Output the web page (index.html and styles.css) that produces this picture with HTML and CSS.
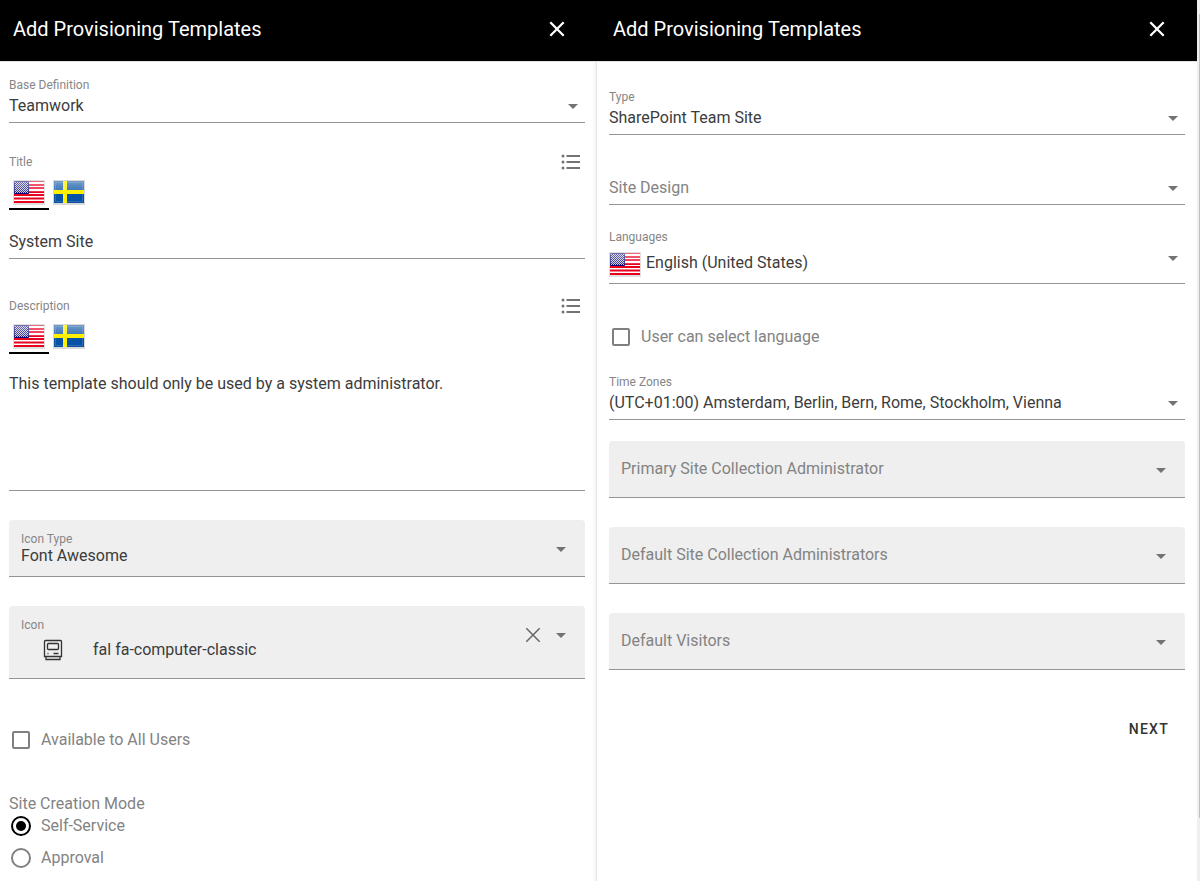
FILE: index.html
```html
<!DOCTYPE html>
<html lang="en">
<head>
<meta charset="utf-8">
<title>Add Provisioning Templates</title>
<link rel="stylesheet" href="styles.css">
</head>
<body>
<svg class="defs" aria-hidden="true">
  <defs>
    <linearGradient id="gloss" x1="0" y1="0" x2="0" y2="1">
      <stop offset="0" stop-color="#fff" stop-opacity=".42"/>
      <stop offset=".48" stop-color="#fff" stop-opacity=".2"/>
      <stop offset=".5" stop-color="#fff" stop-opacity="0"/>
    </linearGradient>
    <pattern id="stars" width="2" height="2" patternUnits="userSpaceOnUse">
      <path fill="#0c0c78" d="M0 0h2v2H0z"/><path fill="#c9c9e6" d="M0 0h1v1H0zM1 1h1v1H1z"/>
    </pattern>
    <symbol id="us" viewBox="0 0 32 25">
      <path fill="#000" opacity=".12" d="M0 0h32v25H0z"/>
      <path fill="#fff" d="M1 1h30v22H1z"/>
      <path fill="#e8001f" d="M1 1h30v1H1zM1 4h30v2H1zM1 7h30v2H1zM1 11h30v2H1zM1 14h30v2H1zM1 17.500h30v2H1zM1 21h30v2H1z"/>
      <path fill="url(#stars)" d="M1 1h15v13H1z"/>
      <path fill="none" stroke="#0c0c78" d="M1.500 1.500h14v12h-14z"/>
      <path fill="url(#gloss)" d="M1 1h30v22H1z"/>
    </symbol>
    <symbol id="se" viewBox="0 0 32 25">
      <path fill="#000" opacity=".15" d="M0 0h32v25H0z"/>
      <path fill="#0852a5" d="M1 1h30v22H1z"/>
      <path fill="url(#gloss)" d="M1 1h30v22H1z"/>
      <path fill="none" stroke="#fff" stroke-opacity=".15" d="M2.500 2.500h27v19h-27z"/>
      <path fill="#fff000" d="M10 1h4v22h-4zM1 10h30v4H1z"/>
      <path fill="#fff" opacity=".25" d="M10 1h4v9h-4z"/>
    </symbol>
    <symbol id="caret" viewBox="0 0 10 5"><path fill="#737373" d="M0 0h10L5 5z"/></symbol>
    <symbol id="list" viewBox="0 0 20 16">
      <path stroke="#737373" stroke-width="2" d="M5.500 2h13.500M5.500 8h13.500M5.500 14h13.500"/>
      <g fill="#737373"><circle cx="2" cy="2" r="1.500"/><circle cx="2" cy="8" r="1.500"/><circle cx="2" cy="14" r="1.500"/></g>
    </symbol>
    <symbol id="close" viewBox="0 0 16 16"><path fill="none" stroke="currentColor" d="M1.300 1.300l13.400 13.400M14.700 1.300L1.300 14.700"/></symbol>
  </defs>
</svg>
<main class="app">
  <section class="panel left">
    <header class="bar"><h1>Add Provisioning Templates</h1><svg class="close"><use href="#close"/></svg></header>
    <div class="body">
      <div class="field base">
        <div class="label">Base Definition</div>
        <div class="value">Teamwork<svg class="caret"><use href="#caret"/></svg></div>
      </div>
      <div class="field title">
        <div class="label">Title<svg class="list"><use href="#list"/></svg></div>
        <div class="tabs"><span class="tab active"><svg class="flag"><use href="#us"/></svg></span><span class="tab"><svg class="flag"><use href="#se"/></svg></span></div>
        <div class="value">System Site</div>
      </div>
      <div class="field description">
        <div class="label">Description<svg class="list"><use href="#list"/></svg></div>
        <div class="tabs"><span class="tab active"><svg class="flag"><use href="#us"/></svg></span><span class="tab"><svg class="flag"><use href="#se"/></svg></span></div>
        <div class="value">This template should only be used by a system administrator.</div>
      </div>
      <div class="box icon-type">
        <div><div class="label">Icon Type</div><div class="value">Font Awesome</div></div>
        <svg class="caret"><use href="#caret"/></svg>
      </div>
      <div class="box icon">
        <div>
          <div class="label">Icon</div>
          <div class="value">
            <svg class="computer" viewBox="0 0 20 22" fill="none" stroke="#333" stroke-width="1.300"><path d="M2.500 1.500h15q1 0 1 1v15h-17v-15q0-1 1-1zM3 17.500v3h14v-3"/><rect x="4.500" y="4.500" width="11" height="6" rx="1"/><path d="M4.500 14.500h1M10.500 14.500h5"/></svg>
            fal fa-computer-classic
          </div>
        </div>
        <div class="actions"><svg class="clear"><use href="#close"/></svg><svg class="caret"><use href="#caret"/></svg></div>
      </div>
      <div class="option available"><span class="check"></span>Available to All Users</div>
      <div class="mode">Site Creation Mode</div>
      <div class="option"><span class="radio on"></span>Self-Service</div>
      <div class="option approval"><span class="radio"></span>Approval</div>
    </div>
  </section>
  <section class="panel right">
    <header class="bar"><h1>Add Provisioning Templates</h1><svg class="close"><use href="#close"/></svg></header>
    <div class="body">
      <div class="field type">
        <div class="label">Type</div>
        <div class="value">SharePoint Team Site<svg class="caret"><use href="#caret"/></svg></div>
      </div>
      <div class="field design"><div class="value muted">Site Design<svg class="caret"><use href="#caret"/></svg></div></div>
      <div class="field languages">
        <div class="label">Languages</div>
        <div class="value"><svg class="flag"><use href="#us"/></svg>English (United States)<svg class="caret"><use href="#caret"/></svg></div>
      </div>
      <div class="option select-language"><span class="check"></span>User can select language</div>
      <div class="field zones">
        <div class="label">Time Zones</div>
        <div class="value">(UTC+01:00) Amsterdam, Berlin, Bern, Rome, Stockholm, Vienna<svg class="caret"><use href="#caret"/></svg></div>
      </div>
      <div class="box people primary">Primary Site Collection Administrator<svg class="caret"><use href="#caret"/></svg></div>
      <div class="box people">Default Site Collection Administrators<svg class="caret"><use href="#caret"/></svg></div>
      <div class="box people">Default Visitors<svg class="caret"><use href="#caret"/></svg></div>
      <div class="next">NEXT</div>
    </div>
  </section>
  <div class="scroll"><div class="thumb"></div></div>
</main>
</body>
</html>
```
FILE: styles.css
```css
* { box-sizing: border-box; }
body { margin: 0; background: #fff; font: 16px/20px Roboto, sans-serif; color: #3c3c3c; overflow: hidden; }
svg { display: block; flex: none; }
.defs { position: absolute; width: 0; height: 0; }
.app { display: flex; height: 881px; }
.panel { height: 881px; overflow: hidden; }
.left { width: 597px; }
.right { width: 600px; }
.bar { display: flex; align-items: center; justify-content: space-between; height: 61px; padding: 0 32px 4px 13px; background: #000; color: #fff; }
.right .bar { padding-left: 16px; }
h1 { margin: 0; font-size: 20px; line-height: 28px; font-weight: 400; }
.close { width: 16px; height: 16px; stroke-width: 2.300; }
.body { height: 820px; padding: 13px 12px 0; border-top: 1px solid #e4e4e4; }
.left .body { padding: 13px 11px 0 9px; border-right: 1px solid #e4e4e4; background: linear-gradient(to left, #f6f6f6, #fff 4px); }
.right .body { padding-top: 25px; }
.field { border-bottom: 1px solid #949494; }
.label { display: flex; align-items: center; height: 20px; font-size: 12px; color: #868686; }
.value { display: flex; align-items: center; height: 20px; white-space: nowrap; }
.muted { color: #838383; }
.caret { width: 10px; height: 5px; }
.field .caret { margin: 0 7px 0 auto; }
.list { width: 20px; height: 16px; margin-left: auto; margin-right: 4px; }
.flag { width: 32px; height: 25px; }
.base, .type { height: 48px; }
.base .value, .type .value, .zones .value { margin-top: 1px; }
.title { height: 107px; margin-top: 29px; }
.description { height: 195px; margin-top: 37px; }
.tabs { display: flex; height: 34px; margin-top: 4px; }
.tab { width: 40px; padding: 4px 4px 0; }
.active { border-bottom: 2px solid #000; }
.title .value { margin-top: 22px; }
.description .value { margin-top: 20px; }
.box { display: flex; align-items: center; justify-content: space-between; padding: 0 19px 0 12px; background: #efefef; border-bottom: 1px solid #949494; border-radius: 4px 4px 0 0; }
.icon-type { height: 57px; margin-top: 29px; align-items: flex-start; padding-top: 9px; }
.icon-type .value { margin-top: -3px; }
.icon-type > .caret { margin-top: 18px; }
.icon { height: 73px; margin-top: 29px; align-items: flex-start; padding-top: 9px; }
.icon .value { margin-top: 5px; }
.computer { width: 20px; height: 22px; margin: 0 30px 0 22px; }
.actions { display: flex; align-items: center; gap: 15px; margin-top: 12px; }
.clear { width: 16px; height: 16px; color: #666; stroke-width: 1.500; }
.option { display: flex; align-items: center; height: 20px; color: #838383; }
.check { width: 18px; height: 18px; margin: 0 11px 0 3px; border: 2px solid #808080; border-radius: 2px; }
.radio { display: grid; place-items: center; width: 20px; height: 20px; margin: 0 10px 0 2px; border: 2px solid #808080; border-radius: 50%; }
.on { border-color: #000; }
.on::after { content: ""; width: 10px; height: 10px; border-radius: 50%; background: #000; }
.available { margin-top: 51px; }
.mode { margin: 44px 0 2px; color: #838383; }
.approval { margin-top: 12px; }
.design { height: 29px; margin-top: 42px; padding-top: 1px; }
.languages { height: 57px; margin-top: 22px; }
.languages .value { margin-top: 6px; }
.languages .flag { margin: 2px 5px 0 0; }
.languages .caret { margin-top: -10px; }
.design { height: 28px; }
.select-language { margin-top: 43px; }
.zones { height: 48px; margin-top: 25px; }
.people { height: 57px; margin-top: 29px; color: #838383; }
.people .caret { margin-top: 3px; }
.primary { margin-top: 21px; }
.next { margin: 49px 16px 0 0; text-align: right; font-size: 14px; font-weight: 500; letter-spacing: 1.250px; color: #333; }
.scroll { width: 3px; background: #efefef; padding: 14px 0 0 2px; }
.thumb { height: 804px; background: #c1c1c1; }
```
